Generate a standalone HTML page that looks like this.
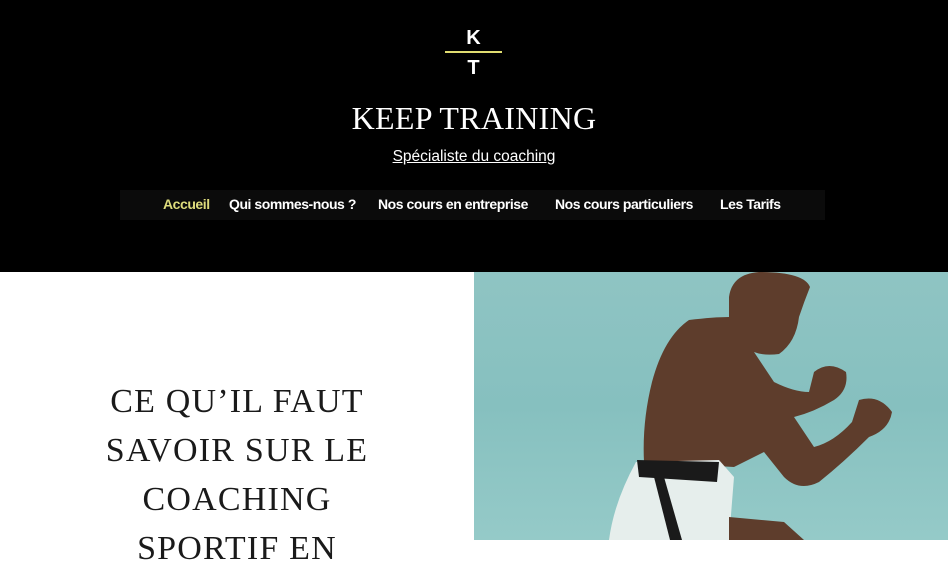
<!DOCTYPE html>
<html><head><meta charset="utf-8"><style>
html,body{margin:0;padding:0;width:948px;height:540px;overflow:hidden;background:#fff}
.hdr{position:absolute;left:0;top:0;width:948px;height:272px;background:#000}
.logo{position:absolute;left:445px;top:27px;width:57px;text-align:center;color:#fff;font:bold 20px "Liberation Sans",sans-serif}
.logo .k{position:absolute;left:0;width:57px;top:0}
.logo .t{position:absolute;left:0;width:57px;top:30px}
.logo .line{position:absolute;left:0;top:24px;width:57px;height:1.5px;background:#e0dc70}
.title{position:absolute;left:0;width:948px;top:100px;text-align:center;color:#fff;font:32px "Liberation Serif",serif;letter-spacing:0.3px}
.sub{position:absolute;left:0;width:948px;top:148px;text-align:center;color:#fff;font:15.5px "Liberation Sans",sans-serif;text-decoration:underline}
.nav{position:absolute;left:120px;top:190px;width:705px;height:30px;background:#0b0b0b}
.nav span{position:absolute;top:6px;color:#fff;font:bold 14px "Liberation Sans",sans-serif;letter-spacing:-0.45px;white-space:nowrap}
.h1{position:absolute;left:0;width:474px;top:377px;text-align:center;color:#1a1a1a;font:34px/49px "Liberation Serif",serif;letter-spacing:1.2px}
.img{position:absolute;left:474px;top:272px;width:474px;height:268px}
</style></head><body>
<div class="hdr">
<div class="logo"><div class="k">K</div><div class="line"></div><div class="t">T</div></div>
<div class="title">KEEP TRAINING</div>
<div class="sub">Spécialiste du coaching</div>
<div class="nav">
<span style="left:43px;color:#dedc7c">Accueil</span>
<span style="left:109px">Qui sommes-nous ?</span>
<span style="left:258px">Nos cours en entreprise</span>
<span style="left:435px">Nos cours particuliers</span>
<span style="left:600px">Les Tarifs</span>
</div>
</div>
<div class="h1">CE QU’IL FAUT<br>SAVOIR SUR LE<br>COACHING<br>SPORTIF EN</div>
<svg class="img" viewBox="0 0 474 268" width="474" height="268">
<defs><linearGradient id="w" x1="0" y1="0" x2="0" y2="1"><stop offset="0" stop-color="#8fc4c3"/><stop offset="0.5" stop-color="#86c0bf"/><stop offset="1" stop-color="#95cac8"/></linearGradient></defs>
<rect width="474" height="268" fill="url(#w)"/>
<path d="M255 25 Q258 2 285 0 Q330 0 336 15 Q330 30 325 45 Q322 70 305 82 Q290 84 280 80 L300 110 Q320 120 335 120 L340 100 Q355 88 372 100 Q375 118 360 128 Q340 140 320 145 L340 175 Q360 170 378 150 L385 128 Q405 122 418 140 Q415 158 395 165 Q370 190 345 210 Q325 220 310 205 L290 180 L260 195 L170 190 Q168 150 178 110 Q190 65 215 48 Q240 45 255 45 Z" fill="#5e3d2c"/>
<path d="M162 190 L245 188 L260 205 L255 268 L135 268 Q140 230 162 190 Z" fill="#e6eeec"/>
<path d="M163 188 L245 190 L243 210 L165 205 Z" fill="#1a1a1a"/>
<path d="M180 205 L190 205 L208 268 L196 268 Z" fill="#1a1a1a"/>
<path d="M255 245 L310 250 L330 268 L255 268 Z" fill="#5e3d2c"/>
</svg>
</body></html>
